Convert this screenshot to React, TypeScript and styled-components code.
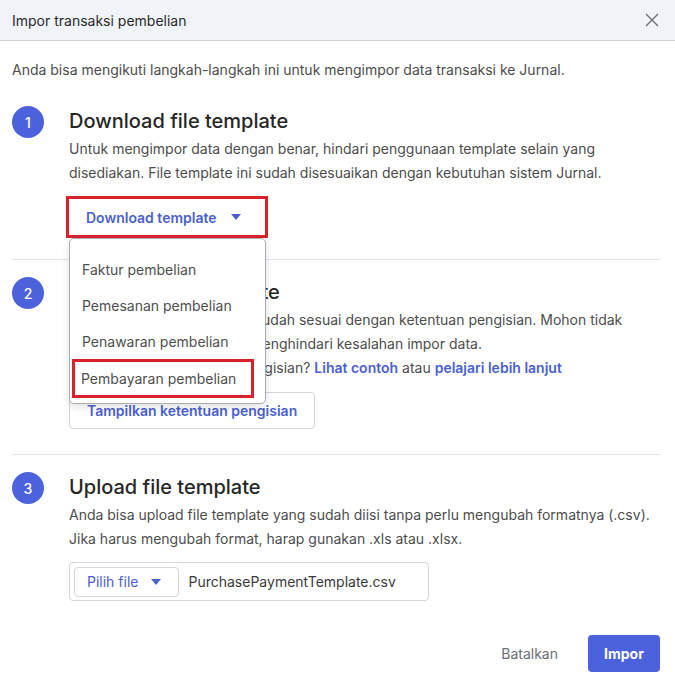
import styled, { createGlobalStyle } from "styled-components";

const GlobalStyle = createGlobalStyle`
  body {
    margin: 0;
    background: #fff;
    font-family: Inter, "Noto Sans", "Liberation Sans", sans-serif;
    color: #4a4a4a;
  }
  * { box-sizing: border-box; }
`;

const Modal = styled.div`
  width: 675px;
  height: 688px;
  display: flex;
  flex-direction: column;
  background: #fff;
`;

const Header = styled.div`
  height: 41px;
  display: flex;
  align-items: center;
  justify-content: space-between;
  padding: 0 13px 0 12px;
  background: #f0f3f8;
  border-bottom: 1px solid #cdd1d8;
  font-size: 14px;
  color: #2b2b2b;
`;

const CloseBtn = styled.button`
  border: 0;
  background: none;
  padding: 0;
  width: 20px;
  height: 20px;
  display: flex;
  align-items: center;
  justify-content: center;
  color: #6b6f75;
  cursor: pointer;
`;

const Body = styled.div`
  flex: 1;
  padding: 17px 14px 0 12px;
`;

const Text = styled.p`
  margin: 0;
  font-size: 14px;
  line-height: 24px;
  color: #4d4d4d;
`;

const Step = styled.section<{ $last?: boolean }>`
  display: grid;
  grid-template-columns: 32px 1fr;
  column-gap: 25px;
  padding: ${(p) => (p.$last ? "17px 0 0" : "17px 0 25px")};
  border-bottom: ${(p) => (p.$last ? "none" : "1px solid #e3e6ea")};
  &:first-of-type {
    padding-top: 24px;
  }
`;

const Badge = styled.div`
  width: 32px;
  height: 32px;
  border-radius: 50%;
  background: #4c62dc;
  color: #fff;
  font-size: 14px;
  font-weight: 500;
  display: flex;
  align-items: center;
  justify-content: center;
`;

const StepBody = styled.div`
  display: flex;
  flex-direction: column;
  align-items: flex-start;
  position: relative;
`;

const Title = styled.h3`
  margin: 1px 0 2px;
  font-size: 20px;
  line-height: 28px;
  font-weight: 500;
  color: #262626;
`;

const Link = styled.a`
  color: #4b5fcf;
  font-weight: 600;
  text-decoration: none;
`;

const OutlineBtn = styled.button<{ $marked?: boolean }>`
  margin-top: ${(p) => (p.$marked ? "15px" : "12px")};
  margin-left: ${(p) => (p.$marked ? "1px" : "0")};
  height: ${(p) => (p.$marked ? "34px" : "37px")};
  display: flex;
  align-items: center;
  gap: 14px;
  padding: 0 ${(p) => (p.$marked ? "22px" : "17px")} 0 ${(p) => (p.$marked ? "15px" : "17px")};
  background: #fff;
  border: 1px solid ${(p) => (p.$marked ? "transparent" : "#d3d6db")};
  border-radius: ${(p) => (p.$marked ? "0" : "4px")};
  outline: ${(p) => (p.$marked ? "3px solid #d9222c" : "none")};
  outline-offset: 1px;
  font-family: inherit;
  font-size: 14px;
  font-weight: 600;
  color: #4b5fcf;
  cursor: pointer;
`;

const Caret = styled.span<{ $color?: string }>`
  width: 0;
  height: 0;
  border-left: 5px solid transparent;
  border-right: 5px solid transparent;
  border-top: 6px solid ${(p) => p.$color || "#4b5fcf"};
`;

const Menu = styled.ul`
  position: absolute;
  top: 132px;
  left: 0;
  z-index: 2;
  width: 197px;
  margin: 0;
  padding: 12px 0 5px;
  list-style: none;
  background: #fff;
  border: 1px solid #a9adb3;
  border-radius: 5px;
  box-shadow: 0 3px 8px rgba(0, 0, 0, 0.12);
`;

const MenuItem = styled.li<{ $marked?: boolean }>`
  display: flex;
  align-items: center;
  padding-left: ${(p) => (p.$marked ? "6px" : "12px")};
  margin: ${(p) => (p.$marked ? "0 11px 0 2px" : "0")};
  border: ${(p) => (p.$marked ? "3px solid #d9222c" : "none")};
  height: ${(p) => (p.$marked ? "39px" : "36px")};
  font-size: 14px;
  color: #4f4f4f;
  cursor: pointer;
`;

const FileField = styled.div`
  margin-top: 11px;
  width: 360px;
  height: 39px;
  display: flex;
  align-items: center;
  gap: 9px;
  padding: 0 4px;
  border: 1px solid #d3d6db;
  border-radius: 4px;
`;

const FileBtn = styled.button`
  height: 30px;
  display: flex;
  align-items: center;
  gap: 13px;
  padding: 0 17px 0 12px;
  background: #fff;
  border: 1px solid #d3d6db;
  border-radius: 4px;
  font-family: inherit;
  font-size: 14px;
  color: #4b5fcf;
`;

const FileName = styled.span`
  font-size: 14px;
  color: #3a3a3a;
`;

const Footer = styled.div`
  display: flex;
  justify-content: flex-end;
  align-items: center;
  gap: 30px;
  padding: 0 15px 16px 0;
`;

const GhostBtn = styled.button`
  border: 0;
  padding: 0;
  background: none;
  font-family: inherit;
  font-size: 14px;
  color: #6b6f75;
  cursor: pointer;
`;

const PrimaryBtn = styled.button`
  width: 72px;
  height: 37px;
  border: 0;
  border-radius: 4px;
  background: #4c62dc;
  color: #fff;
  font-family: inherit;
  font-size: 14px;
  font-weight: 700;
  cursor: pointer;
`;

const templates = [
  "Faktur pembelian",
  "Pemesanan pembelian",
  "Penawaran pembelian",
  "Pembayaran pembelian",
];

export default function App() {
  return (
    <>
      <GlobalStyle />
      <Modal>
        <Header>
          <span>Impor transaksi pembelian</span>
          <CloseBtn aria-label="Tutup">
            <svg width="14" height="14" viewBox="0 0 14 14" fill="none" stroke="currentColor" strokeWidth="1.4">
              <path d="M1 1l12 12M13 1L1 13" />
            </svg>
          </CloseBtn>
        </Header>
        <Body>
          <Text>Anda bisa mengikuti langkah-langkah ini untuk mengimpor data transaksi ke Jurnal.</Text>

          <Step>
            <Badge>1</Badge>
            <StepBody>
              <Title>Download file template</Title>
              <Text>
                Untuk mengimpor data dengan benar, hindari penggunaan template selain yang
                <br />
                disediakan. File template ini sudah disesuaikan dengan kebutuhan sistem Jurnal.
              </Text>
              <OutlineBtn $marked>
                Download template <Caret />
              </OutlineBtn>
              <Menu>
                {templates.map((t, i) => (
                  <MenuItem key={t} $marked={i === templates.length - 1}>
                    {t}
                  </MenuItem>
                ))}
              </Menu>
            </StepBody>
          </Step>

          <Step>
            <Badge>2</Badge>
            <StepBody>
              <Title>Lengkapi file template</Title>
              <Text>
                Pastikan data yang Anda isi sudah sesuai dengan ketentuan pengisian. Mohon tidak
                <br />
                mengubah isi kolom, untuk menghindari kesalahan impor data.
                <br />
                Masih bingung mengenai pengisian? <Link href="#">Lihat contoh</Link> atau{" "}
                <Link href="#">pelajari lebih lanjut</Link>
              </Text>
              <OutlineBtn>Tampilkan ketentuan pengisian</OutlineBtn>
            </StepBody>
          </Step>

          <Step $last>
            <Badge>3</Badge>
            <StepBody>
              <Title>Upload file template</Title>
              <Text>
                Anda bisa upload file template yang sudah diisi tanpa perlu mengubah formatnya (.csv).
                <br />
                Jika harus mengubah format, harap gunakan .xls atau .xlsx.
              </Text>
              <FileField>
                <FileBtn>
                  Pilih file <Caret />
                </FileBtn>
                <FileName>PurchasePaymentTemplate.csv</FileName>
              </FileField>
            </StepBody>
          </Step>
        </Body>
        <Footer>
          <GhostBtn>Batalkan</GhostBtn>
          <PrimaryBtn>Impor</PrimaryBtn>
        </Footer>
      </Modal>
    </>
  );
}
